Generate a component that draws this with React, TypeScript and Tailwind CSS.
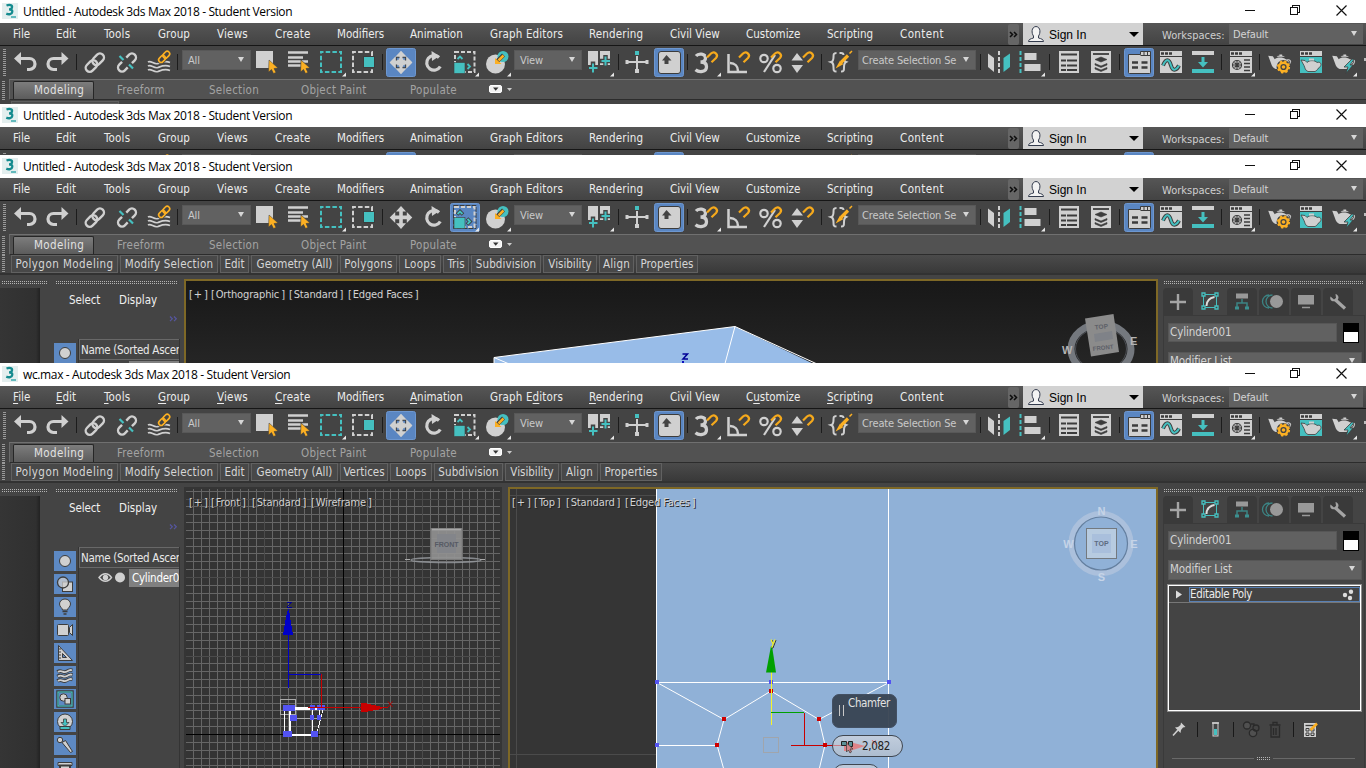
import React from "react";

const G = "#d0d0d0";
const T = "#45c0c0";
const O = "#fcb023";
const D = "#3c3c3c";

function Icon({ children, flyout, active, className = "w-8" }: { children?: React.ReactNode; flyout?: boolean; active?: boolean; className?: string }) {
  return (
    <svg className={`h-[33px] shrink-0 ${className}`} viewBox="0 0 32 33" preserveAspectRatio="xMinYMin meet" fill="none">
      {active && <rect x="1.5" y="2.5" width="29" height="28" rx="2" fill="#5a86c2" stroke="#6d97d0" />}
      {children}
      {flyout && <path d="M30 26.500v4h-4z" fill="#e8e8e8" />}
    </svg>
  );
}

function Sep({ w }: { w: string }) {
  return (
    <div className={`flex shrink-0 items-start pl-[2px] pt-[8px] ${w}`}>
      <div className="h-[16px] w-[1px] bg-[#1c1c1c]" />
    </div>
  );
}

function Combo({ label, w }: { label: string; w: string }) {
  return (
    <div className={`mt-[4px] flex h-[20px] shrink-0 items-center justify-between overflow-hidden border border-[#585858] bg-[#616161] pl-[5px] pr-[6px] text-[#c9c9c9] ${w}`}>
      <span className="whitespace-nowrap pt-[1px] text-[11px] leading-[16px] tracking-[-0.15px]">{label}</span>
      <div className="-mt-[2px] ml-auto h-0 w-0 border-x-[3.5px] border-t-[5px] border-x-transparent border-t-[#d6d6d6]" />
    </div>
  );
}

const Magnet = () => <path d="M16 11.500l4-4c3.200-3 8 1 5 4.500l-4.500 4.300" stroke="#f5a91c" strokeWidth="2.200" />;

const Teapot = () => (
  <g transform="translate(1.500 1.500) scale(.93)">
    <path d="M4 9l5 .5 2 3c2-2.500 9-2.500 12 0l1 .5c3-1.500 6 1 4 4-1 2-3 3-5 4-1 1-2 1.500-4 2h-7c-3-1-4-3-5-6z" fill={G} />
    <path d="M13 10c1-1 2-1 3-1V7.500h3V9c1 0 2 .3 3 1z" fill={G} />
    <path d="M25 14.500c2-1 3 1 1.500 2.500l-2 1.500" stroke={D} strokeWidth="1" />
  </g>
);

const BrowserTop = ({ body = G }: { body?: string }) => (
  <>
    <rect x="5" y="5" width="22" height="22" fill={G} />
    <path d="M6 7.500h3M10 7.500h3M14 7.500h3" stroke={D} strokeWidth="2.500" />
    <rect x="5" y="10" width="22" height="1" fill={D} />
    <rect x="5" y="11" width="22" height="16" fill={body} />
  </>
);

function Toolbar({ mode, labels }: { mode: "move" | "scale"; labels: boolean }) {
  return (
    <div className="flex h-[33px] shrink-0 items-start overflow-hidden bg-[#444444]">
      <div className="h-[33px] w-[10px] shrink-0 pl-[3px] pt-[3px]">
        <div className="h-[27px] w-[3px] bg-[repeating-linear-gradient(180deg,#9a9a9a_0_1px,transparent_1px_2px)]" />
      </div>
      <Icon>
        <path d="M9 12.500h10.500a5.400 5.400 0 0 1 0 11H17" stroke={G} strokeWidth="3.200" />
        <path d="M4 12.500l7-6.500v13z" fill={G} />
      </Icon>
      <Icon>
        <path d="M21 12.500H11.500a5.400 5.400 0 0 0 0 11H15" stroke={G} strokeWidth="3.200" />
        <path d="M26.500 12.500l-7-6.500v13z" fill={G} />
      </Icon>
      <Sep w="w-[5px]" />
      <Icon>
        <g transform="rotate(-45 16 16.500)" stroke={G} strokeWidth="2.400">
          <rect x="4.500" y="12.500" width="13" height="8" rx="4" />
          <rect x="14" y="12.500" width="13" height="8" rx="4" />
        </g>
      </Icon>
      <Icon>
        <g transform="rotate(-45 16 16.500)" stroke={G} strokeWidth="2.400">
          <path d="M13 20.500H9a4 4 0 0 1 0-8h4M19 12.500h4a4 4 0 0 1 0 8h-4" />
        </g>
        <path d="M8.500 10l4 4M18 18.500l4 4" stroke={T} strokeWidth="2.200" />
      </Icon>
      <Icon>
        <g stroke={G} strokeWidth="1.700">
          <path d="M5 16c3-2 6 3 10 1.500s7-3 12-1" />
          <path d="M5 20c3-2 6 3 10 1.500s7-3 12-1" />
          <path d="M5 24c3-2 6 3 10 1.500s7-3 12-1" />
        </g>
        <g transform="rotate(-45 21 11)" stroke="#444" strokeWidth="3.500">
          <rect x="14.500" y="8.500" width="7.500" height="5" rx="2.500" />
          <rect x="20.500" y="8.500" width="7.500" height="5" rx="2.500" />
        </g>
        <g transform="rotate(-45 21 11)" stroke={O} strokeWidth="1.600">
          <rect x="14.500" y="8.500" width="7.500" height="5" rx="2.500" />
          <rect x="20.500" y="8.500" width="7.500" height="5" rx="2.500" />
        </g>
      </Icon>
      <Sep w="w-[6px]" />
      <Combo label={labels ? "All" : ""} w="mr-[1px] ml-[1px] w-[69px]" />
      <Icon>
        <rect x="4" y="5" width="17" height="17" fill={G} />
        <path d="M17 14l9 8-4 .5 2 4-2.500 1-2-4-3 2.500z" fill={O} stroke={D} strokeWidth=".5" />
      </Icon>
      <Icon>
        <path d="M4 6.500h20M4 11.500h15M4 15.500h20M4 19.500h15" stroke={G} strokeWidth="2.500" />
        <path d="M17 14l9 8-4 .5 2 4-2.500 1-2-4-3 2.500z" fill={O} stroke={D} strokeWidth=".6" />
      </Icon>
      <Icon flyout>
        <rect x="5" y="6" width="20" height="20" stroke={T} strokeWidth="2" strokeDasharray="4.500 2.200" strokeDashoffset="2" />
      </Icon>
      <Icon>
        <path d="M24 10V6H5v20h19v-3" stroke={G} strokeWidth="2" strokeDasharray="4.500 2.200" />
        <rect x="15.500" y="10.500" width="11" height="11" fill={T} stroke={D} />
      </Icon>
      <Sep w="w-[5px]" />
      <Icon active={mode === "move"}>
        <path d="M16 5l5 5.500h-3.200v4h4V11l5.500 5.500-5.500 5.500v-3.700h-4v4H21L16 28l-5-5.700h3.200v-4h-4V22l-5.500-5.500L10.200 11v3.500h4v-4H11z" fill={G} />
        {mode === "move" && (
          <>
            <path d="M16 5l11.300 11.500L16 28 4.700 16.500z" fill={G} />
            <path d="M11.500 14.500v-3h3M17.500 11.500h3v3M20.500 18.500v3h-3M14.500 21.500h-3v-3" stroke={D} strokeWidth="1.300" />
            <path d="M11.800 11.800h2v2h-2zM18.200 11.800h2v2h-2zM18.200 19.200h2v2h-2zM11.800 19.200h2v2h-2z" fill="#5a86c2" />
          </>
        )}
      </Icon>
      <Icon>
        <path d="M22 10.500a7.300 7.300 0 1 0 1.300 9" stroke={G} strokeWidth="3.200" transform="translate(0 1)" />
        <path d="M14.500 5l8 5-7.500 5z" fill={G} />
      </Icon>
      <Icon active={mode === "scale"} flyout>
        {mode === "scale" && <rect x="4.500" y="4.500" width="22.500" height="23" stroke={D} strokeDasharray="5 1" />}
        <rect x="6" y="6" width="19.500" height="20" stroke={G} strokeWidth="2" strokeDasharray="4 2" />
        <rect x="5" y="16.500" width="11" height="11" fill={T} stroke={D} strokeWidth=".6" />
        {mode === "scale" && <path d="M8 13.500l3-3 3 3M18 17.500l3 3-3 3" stroke={D} strokeWidth="3.600" />}
        <path d="M8.500 13l2.500-2.500 2.500 2.500M18.500 18l2.500 2.500-2.500 2.500" stroke={T} strokeWidth="1.800" />
      </Icon>
      <Icon flyout>
        <circle cx="14.500" cy="18" r="9.500" fill={G} />
        <circle cx="22" cy="10.500" r="5.500" fill={T} />
        <path d="M22.500 9l-7 7" stroke={D} strokeWidth="4" />
        <path d="M22.500 9.500l-5 5" stroke={O} strokeWidth="2.500" />
        <path d="M14 18v-6l6.500 6z" fill={O} />
      </Icon>
      <Combo label={labels ? "View" : ""} w="ml-[1px] mr-[2px] w-[68px]" />
      <Icon flyout>
        <rect x="4" y="5" width="10" height="14" fill={G} />
        <rect x="16" y="5" width="10" height="14" fill={G} />
        <path d="M9 15.500v12M3.500 22h11M21.500 9v12M16 15h11" stroke="#444" strokeWidth="4.500" />
        <path d="M9 17.500v9M5 22h8.500M21.500 10.500v9M17.500 15h8.500" stroke={T} strokeWidth="2" />
      </Icon>
      <Sep w="w-[5px]" />
      <Icon>
        <path d="M16 10v15M6 16h20" stroke={G} strokeWidth="2" />
        <path d="M14 23h4v4h-4zM4.500 14h3v4h-3zM24.500 14h3v4h-3z" fill={G} />
        <rect x="14" y="5" width="4" height="4" fill={T} />
      </Icon>
      <Icon active>
        <rect x="5.500" y="5.500" width="22" height="22" rx="2.500" fill={G} stroke={D} />
        <path d="M13.500 9l5 5.500H15.500V18h-4v-3.500H9z" fill="#444" />
      </Icon>
      <Sep w="w-[6px]" />
      <Icon flyout>
        <path d="M5 10c2.500-3 9.500-2.500 9.500 2 0 3-2.500 4-5 4 3 0 6 1 6 4.700 0 5.500-7.500 6-11 3" stroke={G} strokeWidth="3.300" />
        <path d="M16 11.500l4-4c3.200-3 8 1 5 4.500l-4.500 4.300" stroke="#444" strokeWidth="4" />
        <Magnet />
      </Icon>
      <Icon>
        <path d="M5.500 8v18H24M7 17c5 0 8 3.500 8 8" stroke={G} strokeWidth="2.500" />
        <Magnet />
      </Icon>
      <Icon>
        <circle cx="9" cy="12.500" r="3.700" stroke={G} strokeWidth="2.200" />
        <circle cx="22" cy="22.500" r="3.700" stroke={G} strokeWidth="2.200" />
        <path d="M20 9L9 26" stroke={G} strokeWidth="2.200" />
        <Magnet />
      </Icon>
      <Icon>
        <path d="M10 7l6 7.500H4.500zM10 27l6-8H4.500z" fill={G} />
        <Magnet />
      </Icon>
      <Sep w="w-[6px]" />
      <Icon>
        <path d="M11.500 7c-3 0-3 1.500-3 4s0 4.500-2.500 5c2.500 1 2.500 2.500 2.500 5.500 0 2.500 0 4 3 4M16 25.500c3 0 3-1.500 3-4 0-3 0-4.500 2-5.500-1.500-.5-2-1.500-2-3M14.500 7h1.500c2 0 2.500 1 2.500 2" stroke={G} strokeWidth="2" />
        <path d="M23 9.500l-7 7" stroke={O} strokeWidth="3.200" />
        <path d="M24.500 7.500l2.500-2.500M15 16l-2.500 4.500 4.500-2.500z" stroke={O} strokeWidth="1.500" fill={O} />
      </Icon>
      <Combo label={labels ? "Create Selection Se" : ""} w="ml-[1px] mr-[2px] w-[118px] !pl-[3px]" />
      <Sep w="w-[5px]" />
      <Icon>
        <path d="M5 7.500l6 4.500v14l-6-5z" fill={G} />
        <path d="M27 7.500L20.500 12v14l6.500-5z" fill={T} />
        <path d="M16 5v23" stroke={G} strokeWidth="2" strokeDasharray="4 2" />
      </Icon>
      <Icon flyout>
        <path d="M5.500 5v23" stroke={T} strokeWidth="2" strokeDasharray="4 2" />
        <rect x="9.500" y="7" width="12" height="7" fill={G} />
        <rect x="9.500" y="18" width="16" height="7" fill={G} />
      </Icon>
      <Sep w="w-[6px]" />
      <Icon>
        <rect x="6" y="5" width="20" height="22" fill={G} />
        <path d="M8 8.500h16M8 14.500h5M14 14.500h10M8 19.500h5M14 19.500h10M8 24h5M14 24h10" stroke={D} strokeWidth="2" />
      </Icon>
      <Icon>
        <rect x="6" y="5" width="20" height="22" fill={G} />
        <path d="M8 8h16" stroke={D} strokeWidth="1.800" />
        <path d="M10 13.500l6-2.500 6 2.500-6 2.500zM10 17.500l6 2.500 6-2.500v1.500L16 21.500 10 19zM10 21.500l6 2.500 6-2.500v1.500L16 25.500 10 23z" fill={D} stroke={D} strokeWidth=".6" />
      </Icon>
      <Sep w="w-[6px]" />
      <Icon active>
        <path d="M5.500 8.500h12v-3h10v21a1 1 0 0 1-1 1h-20a1 1 0 0 1-1-1z" fill={G} stroke={D} />
        <path d="M17.500 9.500h10M21 6v3M24.500 6v3" stroke={D} />
        <path d="M9 16.500h6M18.500 16.500h6M9 21.500h6M18.500 21.500h6" stroke={D} strokeWidth="2.500" />
      </Icon>
      <Icon>
        <BrowserTop />
        <path d="M8 19.500c3-7 6-7 8 0s6 4 8 0" stroke={D} strokeWidth="4" />
        <path d="M8 19.500c3-7 6-7 8 0s6 4 8 0" stroke={T} strokeWidth="2" />
      </Icon>
      <Icon>
        <rect x="5" y="5" width="22" height="4" fill={G} />
        <rect x="5" y="23" width="22" height="4" fill={T} />
        <path d="M14.500 11h3v5h3.500l-5 5.500-5-5.500h3.500z" fill={T} />
      </Icon>
      <Sep w="w-[6px]" />
      <Icon flyout>
        <BrowserTop />
        <circle cx="12" cy="19" r="4.500" stroke={D} strokeWidth="1.200" />
        <path d="M12 15v8M8 19h8M9.500 16.500l5 5M14.500 16.500l-5 5" stroke={D} strokeWidth="1.100" />
        <path d="M19 14h6M19 17.500h6M19 21h6M19 24.500h6" stroke={D} strokeWidth="1.500" />
      </Icon>
      <Sep w="w-[6px]" />
      <Icon>
        <Teapot />
        <circle cx="20.500" cy="21" r="7" fill="#444" />
        <circle cx="20.500" cy="21" r="4.300" stroke={O} strokeWidth="2.400" />
        <circle cx="20.500" cy="21" r="5.700" stroke={O} strokeWidth="1.800" strokeDasharray="2.300 2.180" />
        <circle cx="20.500" cy="21" r="1.800" fill={O} />
      </Icon>
      <Icon>
        <BrowserTop body={T} />
        <path d="M6 14l4 .5 2 2c2-2.500 8-2.500 10 0 4-1.500 6 3 1 6-1 2-2 2.500-3 3h-7c-3-1-3-4-4-6z" fill={G} stroke={D} strokeWidth=".8" />
        <path d="M14 13.500h5" stroke={G} strokeWidth="2" />
      </Icon>
      <Icon flyout>
        <Teapot />
        <path d="M25 13l-8 8h4l-2 6.500 7-8.500H23l4-5.500z" fill={T} stroke={D} strokeWidth=".8" />
      </Icon>
      <div className="mt-[12px] ml-[5px] h-[3px] w-[2px] bg-[#bdbdbd]" />
    </div>
  );
}

const menus: [string, string, number][] = [
  ["File", "w-[43px]", 0],
  ["Edit", "w-[48px]", 0],
  ["Tools", "w-[54px] tracking-[0.2px]", 0],
  ["Group", "w-[59px] tracking-[0.1px]", 0],
  ["Views", "w-[58px] tracking-[0.2px]", 0],
  ["Create", "w-[62px] tracking-[0.2px]", 0],
  ["Modifiers", "w-[73px]", -1],
  ["Animation", "w-[80px]", 0],
  ["Graph Editors", "w-[99px] tracking-[0.15px]", 7],
  ["Rendering", "w-[81px] tracking-[0.15px]", 0],
  ["Civil View", "w-[76px]", -1],
  ["Customize", "w-[81px]", 1],
  ["Scripting", "w-[73px]", 0],
  ["Content", "w-[108px] tracking-[0.4px]", -1],
];

function TitleBar({ title }: { title: string }) {
  return (
    <div className="flex h-[23px] shrink-0 items-center bg-white pl-[2px] text-black">
      <svg className="mb-[1px] h-4 w-4 shrink-0" viewBox="0 0 16 16" fill="none">
        <rect width="16" height="16" fill="#e3eeee" />
        <path d="M4.500 2.500c3-1.300 6-.5 5.500 1.800C9.800 5.700 8.500 6.300 7 6.300c2.300 0 3.500 1 3.300 2.500-.3 2.500-3.500 3-6 1.800" stroke="#158b8f" strokeWidth="2.300" />
        <path d="M9 14h5" stroke="#3aa9ad" strokeWidth="1.500" />
      </svg>
      <span className="ml-[5px] flex-1 whitespace-nowrap font-['Open_Sans','Noto_Sans',sans-serif] text-[12px] tracking-[-0.36px] [font-stretch:normal]">{title}</span>
      <svg className="h-[23px] w-[140px] shrink-0" viewBox="0 0 140 23" fill="none" stroke="#111" strokeWidth="1" shapeRendering="crispEdges">
        <path d="M19 10.500h10" />
        <path d="M64.500 7.500h7v7h-7zM66.500 7v-1.500h7v7H72" />
        <path d="M110.500 5.500l10 10M120.500 5.500l-10 10" shapeRendering="auto" strokeWidth="1.200" />
      </svg>
    </div>
  );
}

function MenuBar({ mnemonics }: { mnemonics?: boolean }) {
  return (
    <div className="flex h-[23px] shrink-0 items-stretch border-b border-[#161616] bg-linear-to-b from-[#565656] to-[#434343] pl-[13px] text-[#ececec]">
      {menus.map(([m, w, u]) => (
        <span key={m} className={`shrink-0 whitespace-nowrap pt-[2px] text-[11.5px] leading-[18px] ${w}`}>
          {mnemonics && u >= 0 ? (
            <>
              {m.slice(0, u)}
              <span className="underline underline-offset-2">{m[u]}</span>
              {m.slice(u + 1)}
            </>
          ) : (
            m
          )}
        </span>
      ))}
      <svg className="mr-[4px] h-[22px] w-[11px] shrink-0" viewBox="0 0 11 22" fill="none">
        <rect y="1" width="11" height="21" rx="2" fill="#666" />
        <path d="M2 9l2.500 2.500L2 14M6 9l2.500 2.500L6 14" stroke="#0d0d0d" strokeWidth="1.500" />
      </svg>
      <div className="flex w-[120px] shrink-0 items-center bg-[#d2d2d2] pl-[4px] text-black">
        <svg className="h-[18px] w-[18px]" viewBox="0 0 18 18" fill="none">
          <path d="M1.500 16.500c0-2 2-2.700 5-3.500v-2C4.500 8.500 4 2 9 1.500c5 .5 4.500 7 2.500 9.500v2c3 .8 5 1.500 5 3.500z" fill="#f3f3f3" stroke="#333b4d" />
        </svg>
        <span className="ml-[4px] flex-1 pt-[1px] font-['Liberation_Sans',sans-serif] text-[12px] [font-stretch:normal]">Sign In</span>
        <div className="mr-[4px] h-0 w-0 border-x-[5px] border-t-[5px] border-x-transparent border-t-black" />
      </div>
      <span className="w-[86px] shrink-0 whitespace-nowrap pl-[19px] pt-[4px] text-[11px] leading-[18px] text-[#cfcfcf]">Workspaces:</span>
      <div className="mt-[1px] flex h-[20px] w-[134px] shrink-0 items-center justify-between bg-[#616161] pl-[4px] pr-[6px] text-[11px] tracking-[-0.15px] text-[#d4d4d4]">
        <span className="pt-[2px]">Default</span>
        <div className="-mt-[2px] h-0 w-0 border-x-[3.5px] border-t-[5px] border-x-transparent border-t-[#d6d6d6]" />
      </div>
    </div>
  );
}

const tabs: [string, string][] = [
  ["Freeform", "w-[92px]"],
  ["Selection", "w-[92px]"],
  ["Object Paint", "w-[109px]"],
  ["Populate", "w-[79px]"],
];

function RibbonTabs() {
  return (
    <div className="flex h-[21px] shrink-0 bg-[#444444]">
      <div className="w-[9px] shrink-0 pl-[2px] pt-[2px]">
        <div className="h-[19px] w-[3px] bg-[repeating-linear-gradient(180deg,#9a9a9a_0_1px,transparent_1px_2px)]" />
      </div>
      <div className="flex flex-1 items-end border-b border-l border-t border-b-[#2c2c2c] border-l-[#6a6a6a] border-t-[#707070] bg-[#525252] pl-[3px] text-[11.5px] leading-[18px] tracking-[0.25px] text-[#a3a3a3]">
        <div className="mr-[23px] h-[18px] w-[81px] shrink-0 rounded-t-[2px] border border-b-0 border-[#262626] bg-linear-to-b from-[#7d7d7d] to-[#5c5c5c] pl-[20px] leading-[17px] tracking-[0.4px] text-[#e2e2e2]">Modeling</div>
        {tabs.map(([t, w]) => (
          <span key={t} className={`h-[18px] shrink-0 whitespace-nowrap ${w}`}>{t}</span>
        ))}
        <svg className="mb-[5px] h-[9px] w-[26px] shrink-0" viewBox="0 0 26 9">
          <rect x=".5" y=".5" width="12" height="7" rx="1.500" fill="#f2f2f2" stroke="#fff" />
          <path d="M4 2.500h5.500L6.700 5.800z" fill="#333" />
          <path d="M18 3h5l-2.500 3z" fill="#ccc" />
        </svg>
      </div>
    </div>
  );
}

function RibbonPanels({ items }: { items: [string, string][] }) {
  return (
    <div className="flex h-[20px] shrink-0 border-b-2 border-[#323232] bg-linear-to-b from-[#4b4b4b] to-[#393939]">
      <div className="w-[11px] shrink-0 bg-[#444444] pl-[2px]">
        <div className="h-[18px] w-[3px] bg-[repeating-linear-gradient(180deg,#9a9a9a_0_1px,transparent_1px_2px)]" />
      </div>
      {items.map(([t, w]) => (
        <div key={t} className={`mr-[2px] flex h-[18px] shrink-0 justify-center whitespace-nowrap border border-[#616161] bg-[#484848] text-[11.5px] leading-[16px] text-[#d6d6d6] ${w}`}>{t}</div>
      ))}
    </div>
  );
}

function WindowFrame({ title, mnemonics, mode, collapsed, className, children }: { title: string; mnemonics?: boolean; mode: "move" | "scale"; collapsed?: boolean; className: string; children?: React.ReactNode }) {
  return (
    <section className={`flex w-full shrink-0 flex-col overflow-hidden bg-[#444444] ${className}`}>
      <TitleBar title={title} />
      <MenuBar mnemonics={mnemonics} />
      <Toolbar mode={mode} labels={!collapsed} />
      {!collapsed && <RibbonTabs />}
      {children}
    </section>
  );
}

const sceneIcons: React.ReactNode[] = [
  <circle cx="11" cy="10" r="5.500" fill={G} stroke={D} />,
  <>
    <rect x="8.500" y="8" width="10" height="9.500" fill={G} stroke={D} />
    <circle cx="9" cy="8.500" r="5.500" fill={G} fillOpacity=".75" stroke={D} strokeWidth="1.300" />
  </>,
  <>
    <path d="M8.500 13c0-2-3-3-3-6a5.500 5 0 0 1 11 0c0 3-3 4-3 6z" fill={G} stroke={D} />
    <path d="M8.500 14.500h5M9.500 17h3" stroke={D} strokeWidth="1.500" />
  </>,
  <>
    <rect x="3.500" y="4.500" width="11" height="11" rx="1" fill={G} stroke={D} />
    <path d="M18.500 4.500v11l-3-3v-5z" fill={G} stroke={D} />
  </>,
  <>
    <path d="M4.500 2.500v15h14z" fill={G} stroke={D} />
    <path d="M8.500 10.500v4h4z" fill="#5a86c2" stroke={D} />
    <path d="M5 6h2M5 9h2M5 12h2M5 15h2" stroke={D} />
  </>,
  <>
    {[6, 10.5, 15].map((y) => (
      <g key={y}>
        <path d={`M3.500 ${y}c4-3 5 2 9-.5s4-1.500 6-1`} stroke={D} strokeWidth="3.600" />
        <path d={`M4 ${y}c4-3 5 2 9-.5s4-1.500 5-1`} stroke={G} strokeWidth="1.900" />
      </g>
    ))}
  </>,
  <>
    <rect x="3.500" y="2.500" width="15" height="15" fill="none" stroke={D} strokeWidth="2.500" />
    <rect x="4" y="3" width="14" height="14" stroke={T} strokeWidth="1.200" />
    <circle cx="9.500" cy="8.500" r="3.700" fill={G} stroke={D} />
    <rect x="11" y="9.500" width="5.500" height="5.500" fill={G} stroke={D} />
  </>,
  <>
    <circle cx="11" cy="9.500" r="7.500" fill={G} stroke={D} />
    <path d="M6 17.500v-3h10v3z" fill={T} stroke={D} />
    <path d="M9.500 7h3v3.500H15L11 14.500 7 10.500h2.500z" fill={T} stroke={D} strokeWidth=".8" />
  </>,
  <>
    <path d="M8 7.500l3.500-2 7 11-2 1z" fill={G} stroke={D} />
    <circle cx="6" cy="5" r="2.700" fill={G} stroke={D} />
  </>,
  <>
    <path d="M4 4.500h14v3H4z" fill={G} stroke={D} />
    <path d="M6 7.500h10v13H6z" fill={G} stroke={D} strokeWidth="2" />
  </>,
];

const HGrip = ({ className = "" }: { className?: string }) => (
  <div className={`flex h-[3px] flex-col justify-between ${className}`}>
    <div className="h-[1px] bg-[repeating-linear-gradient(90deg,#b4b4b4_0_1px,transparent_1px_2px)]" />
    <div className="h-[1px] bg-[repeating-linear-gradient(90deg,#b4b4b4_0_1px,transparent_1px_2px)]" />
  </div>
);

function SceneExplorer({ withTree }: { withTree?: boolean }) {
  return (
    <aside className="flex w-[184px] shrink-0">
      <div className="flex w-[48px] shrink-0 flex-col pt-[6px]">
        <HGrip className="ml-[2px] w-[45px]" />
        <div className="mt-[4px] w-[40px] flex-1 bg-linear-to-r from-[#353535] via-[#303030] via-90% to-[#222]" />
      </div>
      <div className="flex w-[132px] shrink-0 flex-col pt-[6px]">
        <HGrip className="ml-[8px] w-[121px]" />
        <div className="flex h-[28px] items-center gap-[19px] pl-[21px] pt-[6px] text-[11.5px] text-[#f0f0f0]">
          <span className="w-[31px] tracking-[-0.1px]">Select</span>
          <span>Display</span>
        </div>
        <svg className="ml-[121px] mt-[3px] h-[8px] w-[9px] shrink-0" viewBox="0 0 9 8" fill="none">
          <path d="M1 1.500L3.300 3.800 1 6.100M5 1.500l2.300 2.300L5 6.100" stroke="#5656a0" strokeWidth="1.200" />
        </svg>
        <div className="mt-[16px] flex min-h-0 flex-1">
          <div className="flex w-[30px] shrink-0 flex-col gap-[3px] overflow-hidden pl-[6px] pt-[4px]">
            {(withTree ? sceneIcons : sceneIcons.slice(0, 1)).map((ic, i) => (
              <svg key={i} className="h-[20px] w-[22px] shrink-0 bg-[#5d89c3]" viewBox="0 0 22 20" fill="none">
                {ic}
              </svg>
            ))}
          </div>
          <div className="min-w-0 flex-1 overflow-hidden border-l border-r border-[#343434]">
            <div className="h-[21px] overflow-hidden whitespace-nowrap border border-r-0 border-[#686868] pl-[1px] text-[11.5px] leading-[20px] tracking-[-0.3px] text-[#e8e8e8]">Name (Sorted Ascen</div>
            <div className="flex h-[19px] items-center">
              <svg className={`h-[12px] w-[50px] shrink-0 ${withTree ? "" : "invisible"}`} viewBox="0 0 50 12" fill="none">
                <path d="M20 5.500c4-5 9-5 12.500 0-3.500 5-8.500 5-12.500 0z" stroke={G} strokeWidth="1.400" />
                <circle cx="26.500" cy="5.500" r="2.700" fill={G} />
                <circle cx="41" cy="5.500" r="5" fill={G} />
              </svg>
              <div className="h-[18px] flex-1 overflow-hidden whitespace-nowrap bg-[#808080] pl-[3px] text-[11.5px] leading-[18px] tracking-[-0.25px] text-white">{withTree ? "Cylinder001" : ""}</div>
            </div>
          </div>
        </div>
      </div>
    </aside>
  );
}

const panelIcons: React.ReactNode[] = [
  <path d="M15 6v16M7 14h16" stroke="#a5a5a5" strokeWidth="2.400" />,
  <>
    <path d="M8.500 6.500h13v13h-13z" stroke={T} />
    <path d="M7 5h3v3H7zM20 5h3v3h-3zM7 18h3v3H7zM20 18h3v3h-3z" fill="#444" stroke={T} strokeWidth="1.300" />
    <path d="M11.500 18c0-5 3-8 8-9" stroke="#ddd" strokeWidth="2" />
  </>,
  <>
    <rect x="9" y="5.500" width="12" height="5" fill="#999" />
    <path d="M15 11v4M10 19v-4h10v4" stroke="#3c8484" strokeWidth="1.500" />
    <path d="M8 18.500h4v3H8zM18 18.500h4v3h-4z" fill="#3c9090" />
  </>,
  <>
    <path d="M10 7a6.500 6.500 0 0 0 0 13M13.500 7a6.500 6.500 0 0 0 0 13" stroke="#3c8484" strokeWidth="1.300" />
    <circle cx="17.500" cy="13.500" r="6.500" fill="#999" />
  </>,
  <>
    <rect x="7" y="7" width="16" height="9.500" fill="#999" />
    <path d="M11 19.500h8" stroke="#999" strokeWidth="1.500" />
  </>,
  <>
    <path d="M12 11.500l10 9" stroke="#a5a5a5" strokeWidth="3.200" />
    <path d="M7.500 8.500l3.500 3 2-1.500-.5-4c4 1 4 6 0 7s-6-1-5-4.500z" fill="#a5a5a5" />
  </>,
];

const DownArrow = () => <div className="mt-[-3px] h-0 w-0 border-x-[3.5px] border-t-[5px] border-x-transparent border-t-[#d6d6d6]" />;

function CommandPanel() {
  return (
    <aside className="flex min-w-0 flex-1 flex-col overflow-hidden pl-[5px] pt-[6px]">
      <HGrip className="ml-[1px] w-[199px] shrink-0" />
      <div className="mt-[4px] flex h-[27px] shrink-0 gap-[2px]">
        {panelIcons.map((ic, i) => (
          <svg key={i} className={`h-[27px] w-[30px] shrink-0 rounded-t-[4px] ${i === 1 ? "bg-[#444444]" : "bg-[#3a3a3a]"}`} viewBox="0 0 30 27" fill="none">
            {ic}
          </svg>
        ))}
      </div>
      <div className="flex min-h-0 w-[202px] flex-1 flex-col border-l border-t border-r border-[#3a3a3a] pl-[4px] pt-[7px]">
        <div className="flex h-[20px] shrink-0 gap-[6px]">
          <div className="h-[19px] w-[169px] border border-[#565656] bg-[#616161] pl-[1px] text-[11.5px] leading-[17px] tracking-[-0.1px] text-[#d4d4d4]">Cylinder001</div>
          <div className="h-[20px] w-[16px] border border-black bg-[linear-gradient(180deg,#000_45%,#fff_45%)]" />
        </div>
        <div className="mt-[9px] flex h-[20px] w-[194px] shrink-0 items-center justify-between border border-[#565656] bg-[#616161] pl-[1px] pr-[6px] text-[11.5px] tracking-[-0.1px] text-[#d4d4d4]">
          Modifier List
          <DownArrow />
        </div>
        <div className="-ml-[1px] mt-[4px] h-[128px] w-[195px] shrink-0 border border-[#8c8c8c]">
          <div className="h-full border border-white">
            <div className="flex h-[17px] items-start border-b border-[#777] pt-[1px]">
              <svg className="h-[15px] w-[20px] shrink-0" viewBox="0 0 20 15">
                <path d="M7 3.500v8l6-4z" fill="#ddd" />
              </svg>
              <div className="flex h-[15px] flex-1 items-center justify-between border border-[#5880b4] text-[11.5px] tracking-[-0.35px] text-[#ececec]">
                Editable Poly
                <svg className="h-[12px] w-[17px]" viewBox="0 0 17 12" fill="#ddd">
                  <circle cx="3" cy="6" r="2.200" />
                  <circle cx="9" cy="2.700" r="2.200" />
                  <circle cx="8" cy="9" r="2.200" />
                </svg>
              </div>
            </div>
          </div>
        </div>
        <svg className="mt-[8px] h-[20px] w-[190px] shrink-0" viewBox="0 0 190 20" fill="none">
          <path d="M13 2.500l4.500 4.500-2.500.5-2 2.500-.5 3L7 7.500l3-.5 2.500-2z" fill={G} />
          <path d="M10 10l-5 5.500" stroke={G} strokeWidth="1.600" />
          <path d="M29.500 2v15M65.500 2v15M125.500 2v15" stroke="#191919" strokeWidth="1" />
          <path d="M44 3h7" stroke={G} strokeWidth="1.500" />
          <rect x="45" y="3" width="5" height="13" stroke={G} />
          <path d="M46 9h3v6h-3z" fill={T} />
          <g stroke="#2a2a2a" strokeWidth="1.300">
            <circle cx="79" cy="5.500" r="3.500" fill="#505050" />
            <circle cx="85" cy="13" r="3.700" fill="#505050" />
            <circle cx="88" cy="8" r="3" />
            <path d="M83 4h3v2M101.500 5h11M105 4.500v-2h4v2M103 6v11h8.500V6M105.500 8v7M108 8v7" />
          </g>
          <path d="M136 3h12v14h-12z" fill={G} />
          <path d="M137.500 5.500h9" stroke={D} strokeWidth="1.300" />
          <path d="M138 8.500h3v2.500h-3zM143 8.500h3v2.500h-3zM138 13h3v2.500h-3zM143 13h3v2.500h-3z" stroke={D} />
          <path d="M149 3.500l-6.500 6.500" stroke={O} strokeWidth="2.500" />
        </svg>
        <div className="mt-[15px] flex h-[12px] shrink-0 items-start">
          <div className="mt-[3px] ml-[4px] h-[1px] w-[82px] bg-[#696969]" />
          <HGrip className="mx-[3px] mt-[2px] w-[13px]" />
          <div className="mt-[3px] h-[1px] w-[82px] bg-[#696969]" />
        </div>
      </div>
    </aside>
  );
}

function ViewLabel({ parts, className }: { parts: [string, string][]; className: string }) {
  return (
    <div className={`absolute top-[6px] flex whitespace-nowrap text-[11px] leading-[15px] text-[#d2d2d2] [text-shadow:1px_1px_0_#222] ${className}`}>
      {parts.map(([p, w]) => (
        <span key={p} className={`shrink-0 tracking-[-0.15px] ${w}`}>
          [<span className="mr-[2px] ml-[1px]">{p}</span>]
        </span>
      ))}
    </div>
  );
}

function OrthoViewport() {
  return (
    <div className="relative mt-[4px] w-[974px] shrink-0 overflow-hidden border-2 border-b-0 border-[#7e6826] bg-linear-to-b from-[#181818] to-[#252525]">
      <svg className="absolute left-0 top-0 h-[84px] w-[970px]" viewBox="186 281 970 84" fill="none">
        <path d="M494 357.500L735 326.500 816 365H494z" fill="#98bce8" />
        <path d="M494 365v-7.500L735 326.500 816 363.500M735 326.500l-10 37M494 357.500l14 6" stroke="#fff" />
        <path d="M682.500 354h5l-4.500 5h5" stroke="#000096" strokeWidth="1.500" />
        <path d="M683 361v3" stroke="#1010c0" strokeWidth="2" />
        <ellipse cx="1101" cy="349" rx="30" ry="25" stroke="#74787e" strokeWidth="7" />
        <ellipse cx="1101" cy="349" rx="25.500" ry="21" stroke="#4b4e54" />
        <path d="M1085 318.500l28.500-4.500 5.500 38-28 4.500z" fill="#8b8b8b" />
        <path d="M1094 334l18-3 1 8-18 3z" fill="#7f8288" />
        <g fontFamily="Liberation Sans, sans-serif" fontWeight="bold">
          <text x="1095" y="329" fontSize="6.500" fill="#5d6068" transform="rotate(-7 1101 329)">TOP</text>
          <text x="1093" y="350" fontSize="6" fill="#5d6068" transform="rotate(-7 1101 350)">FRONT</text>
          <text x="1062" y="354" fontSize="11" fill="#b4b4b4">W</text>
          <text x="1130" y="345" fontSize="11" fill="#b4b4b4">E</text>
        </g>
      </svg>
      <ViewLabel className="left-[3px]" parts={[["+", "w-[22px]"], ["Orthographic", "w-[78px]"], ["Standard", "w-[59px]"], ["Edged Faces", ""]]} />
    </div>
  );
}

const gridX = Array.from({ length: 41 }, (_, i) => i - 20);
const gridY = Array.from({ length: 36 }, (_, i) => i - 31);

function FrontViewport() {
  return (
    <div className="relative mt-[4px] w-[318px] shrink-0 overflow-hidden border-2 border-b-0 border-[#353535] bg-[#343434]">
      <svg className="absolute left-0 top-0 h-[279px] w-[315px]" viewBox="186 489 315 279" fill="none">
        <g shapeRendering="crispEdges" strokeWidth="1">
          {gridX.map((k) => k % 10 !== 0 && <path key={k} d={`M${Math.round(343 + k * 7.9) + 0.5} 489V768`} stroke="#666" />)}
          {gridY.map((k) => k % 10 !== 0 && <path key={k} d={`M186 ${Math.round(734 + k * 7.85) + 0.5}H500`} stroke="#666" />)}
          {[-10, 10].map((k) => <path key={k} d={`M${343.5 + k * 7.9} 489V768`} stroke="#4b4b4b" />)}
          {[-30, -20, -10].map((k) => <path key={k} d={`M186 ${734.5 + k * 7.85}H500`} stroke="#4b4b4b" />)}
          <path d="M343.500 489V768M186 734.500H500" stroke="#000" />
        </g>
        <ellipse cx="446" cy="560" rx="35" ry="2.500" stroke="#9a9da3" strokeWidth="1.500" strokeOpacity=".8" />
        <path d="M405 559.500h5M480 559.500h5" stroke="#aaa" />
        <rect x="431" y="528.500" width="31" height="31" fill="#909090" fillOpacity=".92" stroke="#7a7a7a" />
        <path d="M432 529.500h29" stroke="#a8a8a8" strokeWidth="1.500" />
        <rect x="437" y="534" width="19" height="19" fill="#83858a" />
        <text x="446.500" y="546.500" fontSize="7" fontWeight="bold" fill="#565a64" textAnchor="middle" fontFamily="Liberation Sans, sans-serif">FRONT</text>
        <g shapeRendering="crispEdges">
          <path d="M288.500 634V688M288 674.500H321" stroke="#0000c8" />
          <path d="M288 609h1l1 8 3 17.500h-10l3-17.500z" fill="#0000c8" />
          <path d="M287 602.500h5M291 603l-4 4M287 607h5" stroke="#000090" />
          <rect x="280.500" y="699.500" width="15" height="15" stroke="#aaa" />
          <path d="M291 708.500h32" stroke="#fff" strokeWidth="3" />
          <path d="M284.500 710v24M312.500 710v24M319.500 710v6" stroke="#fff" />
          <path d="M289.500 710v24M291 734.500h25" stroke="#fff" strokeWidth="2" />
          <path d="M323 710l-6 23" stroke="#fff" strokeDasharray="3 1" />
          <path d="M296 718.500h23" stroke="#aaa" />
          <path d="M283 705h12v6h-12zM310 705h5v5h-5zM317 705h8v5h-8zM290 715h7v6h-7zM310 715h4v5h-4zM317 715h4v5h-4zM283 731h9v6h-9zM311 731h7v6h-7z" fill="#5353f2" />
          <path d="M321.500 674v33M308 707.500h53M382 707.500h6" stroke="#c80000" />
          <path d="M361 703h4l17 4v2l-17 3h-4z" fill="#c80000" />
        </g>
        <path d="M388 701.500l4.500 5.500M392.500 701.500l-4.500 5.500" stroke="#b00000" />
      </svg>
      <ViewLabel className="left-[3px]" parts={[["+", "w-[22px]"], ["Front", "w-[41px]"], ["Standard", "w-[59px]"], ["Wireframe", ""]]} />
    </div>
  );
}

function TopViewport() {
  return (
    <div className="relative mt-[4px] ml-[6px] w-[650px] shrink-0 overflow-hidden border-2 border-b-0 border-[#7e6826] bg-[#353535]">
      <svg className="absolute left-0 top-0 h-[279px] w-[646px]" viewBox="510 489 646 279" fill="none">
        <path d="M516.500 489V768M510 495.500H657M510 754.500H657" stroke="#4b4b4b" />
        <rect x="656" y="489" width="500" height="279" fill="#90b1d7" />
        <path d="M656.500 489V768M888.500 489V768M657 682.500H889M657 745.500H717" stroke="#fff" />
        <path d="M657 682.500l67 37 47-28.500 48 28.500 70-37M724 719.500l-7 25.500 7 25M819 719.500l6 25.500-6 25" stroke="#fff" />
        <path d="M655 680h4v4h-4zM769 680h4v4h-4zM887 680h4v4h-4zM655 743h4v4h-4zM887 743h4v4h-4z" fill="#5353f2" />
        <path d="M769 689h4v4h-4zM722 717h4v4h-4zM817 717h4v4h-4zM715 743h4v4h-4zM823 743h4v4h-4z" fill="#d00000" />
        <rect x="763.500" y="737.500" width="15" height="15" stroke="#a0a5ac" />
        <path d="M771.500 672v53" stroke="#f5f52a" />
        <path d="M771 646h1l4 26.500h-10z" fill="#00a000" />
        <path d="M771 712.500h33" stroke="#00a000" />
        <path d="M804.500 713v32.500M791 745.500h52" stroke="#c80000" />
        <path d="M772 640l1.700 4.500M776 640l-3 8h-1" stroke="#333" strokeWidth="1" />
        <path d="M771 639.500l2 4.500M775 639.500l-3 7.500h-1" stroke="#f2f22a" strokeWidth="1.200" />
        <circle cx="1101" cy="543.500" r="29.500" stroke="#abc0dc" strokeWidth="6" />
        <circle cx="1101" cy="543.500" r="26.500" stroke="#647f9f" strokeWidth="1.200" />
        <rect x="1086.500" y="528.500" width="30" height="30" fill="#b7cbe0" stroke="#73797f" />
        <rect x="1092" y="534" width="19" height="19" fill="#a9bfdc" />
        <g fontFamily="Liberation Sans, sans-serif" fontWeight="bold" textAnchor="middle">
          <text x="1101.500" y="546" fontSize="7" fill="#5d6b80">TOP</text>
          <g fontSize="11" fill="#c6d4e7">
            <text x="1101.500" y="515">N</text>
            <text x="1101.500" y="580.500">S</text>
            <text x="1068.500" y="548">W</text>
            <text x="1134" y="548">E</text>
          </g>
        </g>
      </svg>
      <ViewLabel className="left-[2px]" parts={[["+", "w-[22px]"], ["Top", "w-[32px]"], ["Standard", "w-[59px]"], ["Edged Faces", ""]]} />
      <div className="absolute left-[322px] top-[205px] flex h-[34px] w-[65px] rounded-[7px] border border-[#435063] bg-[#384352]/95 pl-[6px] text-[11.5px] text-[#e2e2e2]">
        <div className="mt-[10px] h-[11px] w-[5px] border-x border-[#c8c8c8]" />
        <span className="ml-[4px] tracking-[-0.35px]">Chamfer</span>
      </div>
      <div className="absolute left-[322px] top-[246px] flex h-[22px] w-[71px] items-center rounded-full border border-[#3f4650] bg-linear-to-b from-[#c1cddd] to-[#adbdd0] text-[11.5px] text-[#222]">
        <svg className="h-[20px] w-[60px] shrink-0" viewBox="0 0 60 20" fill="none">
          <path d="M0 9.500h12" stroke="#c97b84" />
          <path d="M11 6h6l15 4-15 5h-6z" fill="#df8488" />
          <path d="M8.500 5.500h5v4h-5zM15.500 5.500h4v5h-4z" fill="#5b9298" stroke="#222" />
          <path d="M13.500 7v9l2-2 1.500 3 1.500-1-1.500-3h3z" fill="#d3858a" stroke="#444" strokeWidth=".8" />
          <path d="M39 4l4 5M43 4l-4 5" stroke="#df7d84" />
        </svg>
        <span className="-ml-[31px] pt-[2px] tracking-[-0.3px]">2,082</span>
      </div>
      <div className="absolute left-[323px] top-[275px] h-[20px] w-[47px] rounded-full border border-[#3f4650] bg-[#bcc9da]" />
    </div>
  );
}

const polygonPanels: [string, string][] = [
  ["Polygon Modeling", "w-[107px] tracking-[0.45px]"],
  ["Modify Selection", "w-[98px] tracking-[0.2px]"],
  ["Edit", "w-[29px]"],
  ["Geometry (All)", "w-[87px]"],
  ["Polygons", "w-[57px] tracking-[0.3px]"],
  ["Loops", "w-[42px] tracking-[0.3px]"],
  ["Tris", "w-[26px]"],
  ["Subdivision", "w-[70px] tracking-[0.1px]"],
  ["Visibility", "w-[54px]"],
  ["Align", "w-[35px] tracking-[0.2px]"],
  ["Properties", "w-[62px] tracking-[0.1px]"],
];

const vertexPanels: [string, string][] = [
  ["Polygon Modeling", "w-[107px] tracking-[0.45px]"],
  ["Modify Selection", "w-[98px] tracking-[0.2px]"],
  ["Edit", "w-[29px]"],
  ["Geometry (All)", "w-[87px]"],
  ["Vertices", "w-[48px]"],
  ["Loops", "w-[42px] tracking-[0.2px]"],
  ["Subdivision", "w-[69px] tracking-[0.1px]"],
  ["Visibility", "w-[54px]"],
  ["Align", "w-[37px] tracking-[0.2px]"],
  ["Properties", "w-[62px] tracking-[0.1px]"],
];

export default function App() {
  return (
    <main className="flex h-[768px] w-[1366px] flex-col overflow-hidden bg-[#444444] font-['DejaVu_Sans_Condensed','DejaVu_Sans','Noto_Sans',sans-serif] [font-stretch:condensed]">
      <WindowFrame title="Untitled - Autodesk 3ds Max 2018 - Student Version" mode="move" className="h-[104px]">
        <div className="ml-[11px] mt-[1px] h-[10px] w-[108px] border border-[#5f5f5f] bg-[#4b4b4b]" />
      </WindowFrame>
      <WindowFrame title="Untitled - Autodesk 3ds Max 2018 - Student Version" mode="move" collapsed className="h-[51px]" />
      <WindowFrame title="Untitled - Autodesk 3ds Max 2018 - Student Version" mode="scale" className="h-[208px]">
        <RibbonPanels items={polygonPanels} />
        <div className="flex min-h-0 flex-1">
          <SceneExplorer />
          <OrthoViewport />
          <CommandPanel />
        </div>
      </WindowFrame>
      <WindowFrame title="wc.max - Autodesk 3ds Max 2018 - Student Version" mnemonics mode="move" className="h-[405px]">
        <RibbonPanels items={vertexPanels} />
        <div className="flex min-h-0 flex-1">
          <SceneExplorer withTree />
          <FrontViewport />
          <TopViewport />
          <CommandPanel />
        </div>
      </WindowFrame>
    </main>
  );
}
